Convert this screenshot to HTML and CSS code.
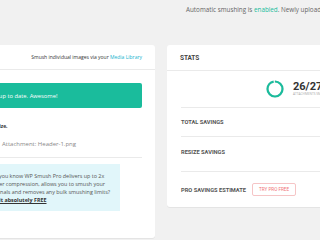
FILE: index.html
```html
<!DOCTYPE html>
<html lang="en">
<head>
    <meta charset="UTF-8">
    <meta name="viewport" content="width=device-width, initial-scale=1.0">
    <title>WP Smush</title>
    <link rel="stylesheet" href="styles.css">
</head>
<body>

<div id="smush-page">
    <div class="top-notice">
        <p>Automatic smushing is <span class="enabled">enabled</span>. Newly uploaded images will be smushed automatically.</p>
    </div>

    <div class="box-row">
        <div class="box bulk-box">
            <div class="box-header">
                <p>Smush individual images via your <a href="#">Media Library</a></p>
            </div>
            <div class="box-body">
                <div class="all-done">All attachments are up to date. Awesome!</div>

                <div class="skipped">
                    <p class="skipped-title">The following image could not be smushed due to size.</p>
                    <p class="skipped-item">Attachment: Header-1.png</p>
                </div>

                <div class="pro-notice">
                    Did you know WP Smush Pro delivers up to 2x<br>
                    better compression, allows you to smush your<br>
                    originals and removes any bulk smushing limits?<br>
                    <a href="#">Try it absolutely FREE</a>
                </div>
            </div>
        </div>

        <div class="box stats-box">
            <div class="box-header">
                <h3>Stats</h3>
            </div>
            <div class="stats-row progress-row">
                <svg class="ring" width="18" height="18" viewBox="0 0 18 18">
                    <circle cx="9" cy="9" r="7.5" fill="none" stroke="#e6e6e6" stroke-width="2.2"/>
                    <circle cx="9" cy="9" r="7.5" fill="none" stroke="#1abc9c" stroke-width="2.2"
                            stroke-dasharray="45.4 47.1" transform="rotate(-90 9 9)"/>
                </svg>
                <div class="count">
                    <span class="count-num">26/27</span>
                    <span class="count-label">Attachments smushed</span>
                </div>
            </div>
            <div class="stats-row">
                <span class="stats-label">Total savings</span>
            </div>
            <div class="stats-row resize-row">
                <span class="stats-label">Resize savings</span>
            </div>
            <div class="stats-row last-row">
                <span class="stats-label">Pro savings estimate</span>
                <a class="try-pro" href="#">Try Pro Free</a>
            </div>
        </div>
    </div>
</div>

</body>
</html>
```

FILE: styles.css
```css
html, body {
    margin: 0;
    padding: 0;
    background: #f1f1f1;
    overflow: hidden;
}

body {
    font-family: 'Open Sans', sans-serif;
    color: #555;
    width: 320px;
    height: 240px;
}

p {
    margin: 0;
}

.top-notice {
    height: 45px;
    padding-left: 186px;
    white-space: nowrap;
    font-size: 6.3px;
    color: #666;
}

.top-notice p {
    padding-top: 5px;
}

.enabled {
    color: #1abc9c;
}

.box-row {
    display: flex;
    gap: 12px;
    margin-left: -170px;
    align-items: flex-start;
}

.box {
    background: #fff;
    border-radius: 3px;
    box-shadow: 0 1px 0 #e4e4e4;
    flex-shrink: 0;
}

.bulk-box {
    width: 325px;
    height: 193px;
}

.stats-box {
    width: 330px;
}

.box-header {
    height: 25px;
    border-bottom: 1px solid #eaeaea;
    display: flex;
    align-items: center;
    padding: 0 13px;
}

.bulk-box .box-header {
    height: 24px;
    justify-content: flex-end;
    font-size: 5px;
    color: #333;
}

.box-header a {
    color: #19b4cf;
    text-decoration: none;
}

.box-header h3 {
    margin: 0;
    font-family: 'Roboto', sans-serif;
    font-weight: 700;
    font-size: 6.5px;
    text-transform: uppercase;
    color: #444;
    letter-spacing: -0.1px;
}

.box-body {
    padding: 13px 13px 0 13px;
}

.all-done {
    background: #1abc9c;
    color: #fff;
    height: 25px;
    border-radius: 2px;
    display: flex;
    align-items: center;
    padding-left: 102px;
    font-size: 5.8px;
    white-space: nowrap;
}

.skipped {
    border-bottom: 1px solid #eaeaea;
    padding: 15px 0 9px 0;
}

.skipped-title {
    font-size: 5px;
    font-weight: 700;
    color: #333;
    padding-left: 29px;
    white-space: nowrap;
}

.skipped-item {
    margin-top: 11px;
    font-size: 6px;
    color: #888;
    padding-left: 159px;
}

.pro-notice {
    margin-top: 6px;
    width: 277px;
    box-sizing: border-box;
    background: #e1f6fa;
    color: #555;
    font-size: 5.4px;
    line-height: 8px;
    padding: 8px 0 7px 146px;
    white-space: nowrap;
}

.pro-notice a {
    color: #333;
    font-weight: 700;
}

.stats-row {
    margin: 0 0 0 14px;
    border-bottom: 1px solid #eaeaea;
    height: 28px;
    display: flex;
    align-items: center;
}

.progress-row {
    height: 36px;
    padding-left: 85px;
    gap: 9px;
}

.resize-row {
    height: 35px;
    align-items: flex-start;
    padding-top: 12px;
    box-sizing: border-box;
}

.last-row {
    border-bottom: none;
    height: 35px;
    gap: 6px;
}

.stats-label {
    font-family: 'Roboto', sans-serif;
    font-weight: 700;
    font-size: 5.7px;
    text-transform: uppercase;
    color: #555;
}

.count {
    display: flex;
    flex-direction: column;
    line-height: 1;
    margin-top: -1px;
}

.count-num {
    font-family: 'Roboto', sans-serif;
    font-weight: 700;
    font-size: 11px;
    color: #333;
}

.count-label {
    font-size: 3.2px;
    text-transform: uppercase;
    color: #aaa;
    margin-top: 1px;
}

.try-pro {
    font-family: 'Roboto', sans-serif;
    font-size: 4.6px;
    text-transform: uppercase;
    color: #f07478;
    text-decoration: none;
    border: 1px solid #f6c5c6;
    border-radius: 2px;
    padding: 3px 6px;
}
```
